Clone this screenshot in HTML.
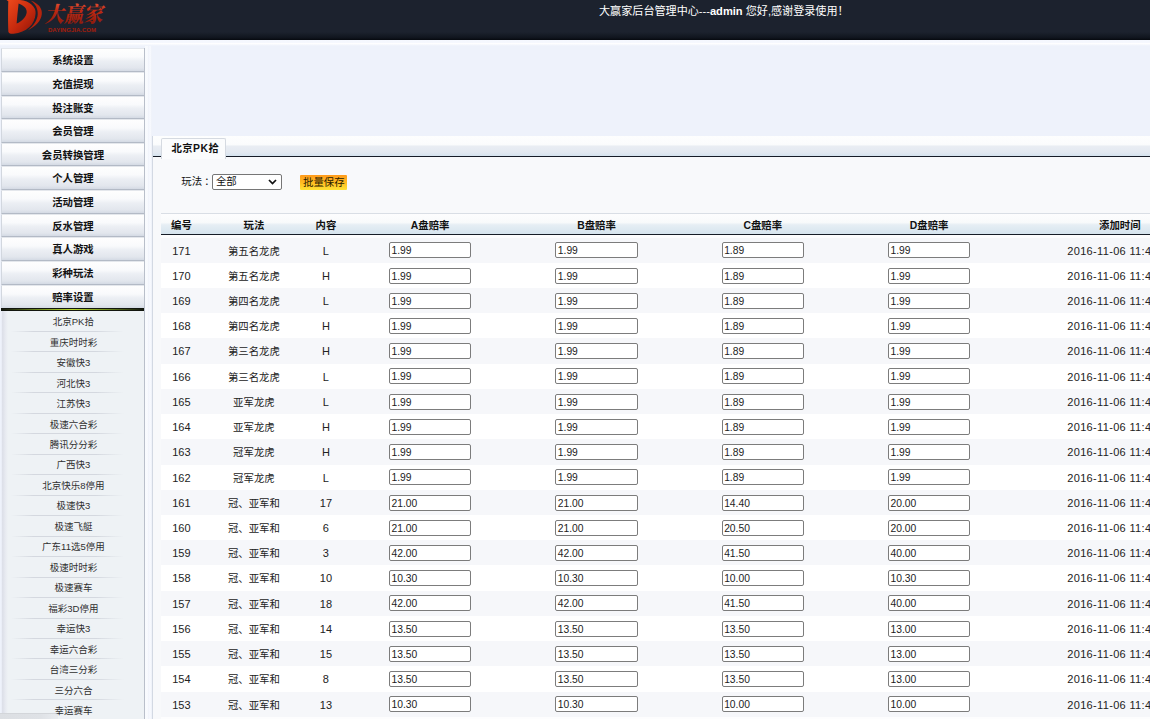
<!DOCTYPE html>
<html lang="zh-CN"><head><meta charset="utf-8"><title>大赢家后台管理中心</title>
<style>
html,body{margin:0;padding:0;}
body{width:1150px;height:719px;overflow:hidden;position:relative;background:#eef2fb;font-family:"Liberation Sans","Noto Sans CJK SC",sans-serif;font-size:10.4px;color:#111;}
*{box-sizing:border-box;}
#top{position:absolute;left:0;top:0;width:1150px;height:40px;background:linear-gradient(#1c222e 0,#1c222e 80%,#10151e 94%,#06090f 100%);}
#band{z-index:3;position:absolute;left:0;top:40px;width:1150px;height:6px;background:linear-gradient(#f4f7fe 0,#f6f8fe 45%,#ffffff 55%,#eef2fb 100%);}
#top .msg{position:absolute;left:599px;top:3.7px;color:#fff;font-size:11.1px;white-space:nowrap;line-height:14px;}
#top .msg b{font-weight:bold;}
#logo{position:absolute;left:0;top:0;}
#side{position:absolute;left:0;top:40px;width:145.2px;height:679px;background:linear-gradient(#eef2fb 0,#eef2fb 8px,rgba(238,242,251,0) 8px),linear-gradient(90deg,#eef2fb 0,#eef2fb 1.2px,#dcdfe8 2.6px,#e6e9f0 5px,#eef2f5 8px,#eef2f5 100%);overflow:hidden;}
#sbr{position:absolute;left:144.2px;top:48px;width:1px;height:671px;background:#b9bfca;}
#side .m{font-family:"Liberation Sans","Noto Sans CJK SC",sans-serif;position:absolute;left:1.2px;width:143.6px;height:23.65px;border:1px solid #d2d7df;border-top-color:#e4e7ec;border-bottom-color:#b3bac6;border-radius:1px;background:linear-gradient(#fefefe 0%,#f9fafc 36%,#eceff4 54%,#e2e6ed 86%,#d4dae4 100%);text-align:center;font-weight:bold;color:#111;font-size:10.4px;line-height:23.6px;}
#side .m.on{border-bottom:none;}
#side .ul{position:absolute;left:1.2px;width:143px;top:267.8px;height:3px;background:linear-gradient(#12160f 0,#12160f 32%,rgba(18,22,15,0) 42%,rgba(18,22,15,0) 60%,#12160f 72%,#12160f 100%),linear-gradient(90deg,#12160f 0%,#6f8a1f 25%,#bcd92e 50%,#6f8a1f 75%,#12160f 100%);}
#side .s{position:absolute;left:1.2px;width:144.4px;height:20.47px;text-align:center;color:#303030;font-size:9.5px;line-height:22px;}
#side .s i{position:absolute;left:10px;right:22px;bottom:-0.3px;height:1px;background:linear-gradient(90deg,rgba(212,216,223,0),rgba(212,216,223,1) 20%,rgba(212,216,223,1) 75%,rgba(212,216,223,0));}
#split{position:absolute;left:145.2px;top:40px;width:7.1px;height:679px;background:linear-gradient(90deg,#f8fafe 0,#f9fbfe 2.4px,#eef2fa 3px,#f5f7fd 4px,#f7f9fe 6px,#e6ebf5 7.1px);}
#panel{position:absolute;left:152.3px;top:136px;width:1000px;height:590px;background:#f8f9fb;border-left:1px solid #d3d9e3;}
#tabbar{position:absolute;left:0;top:0;width:1000px;height:20.8px;background:linear-gradient(#fdfefe 0%,#fbfcfd 42%,#e9edf3 52%,#e3e9f1 82%,#d5e3ef 100%);border-bottom:1.5px solid #161c27;}
#tab{font-family:"Liberation Sans","Noto Sans CJK SC",sans-serif;position:absolute;left:7.8px;top:1.6px;width:64.5px;height:21.8px;background:#fbfcfd;border:1px solid #d5dae1;border-bottom:none;border-radius:2px 2px 0 0;font-weight:bold;font-size:10.4px;text-align:center;line-height:20.6px;color:#111;padding-left:4px;letter-spacing:0.45px;}
#flt{position:absolute;left:28px;top:38px;height:16px;white-space:nowrap;font-size:10.4px;line-height:16px;}
#sel{position:absolute;left:58.7px;top:38.2px;width:70px;height:15.6px;border:1px solid #767676;border-radius:2px;background:#fff;font-size:10.4px;line-height:13px;padding-left:3px;}
#sel svg{position:absolute;right:4px;top:4px;}
#btn{position:absolute;left:146.8px;top:38.5px;width:47.4px;height:15.4px;background:linear-gradient(#ff9a1c 0%,#ffb820 45%,#ffe234 100%);border-radius:1px;color:#2a2000;font-size:10.4px;line-height:15px;text-align:center;}
#tbl{position:absolute;left:8.2px;top:76.8px;width:1070px;height:520px;background:#fdfdfe;}
#thead{font-family:"Liberation Sans","Noto Sans CJK SC",sans-serif;position:absolute;left:0;top:0;width:1070px;height:22.6px;border-top:1px solid #d9dee5;background:linear-gradient(#fdfdfe 0%,#f8fafb 42%,#e6eef4 54%,#d6e4ee 100%);border-bottom:1.4px solid #161c27;font-weight:bold;color:#111;}
.c{position:absolute;top:0;text-align:center;white-space:nowrap;}
.c1{left:0;width:43px}.c2{left:43px;width:102px}.c3{left:145px;width:42px}
.c4{left:187px;width:166.33px}.c5{left:353.33px;width:166.33px}.c6{left:519.67px;width:166.33px}.c7{left:686px;width:166.33px}.c8{left:852.3px;width:215px}
#thead .c{line-height:23.4px;font-size:10.4px;margin-left:-1.5px;}
.r{position:absolute;left:0;width:1070px;height:25.2px;background:#fff;line-height:25.2px;font-size:10.4px;color:#222;}
.r.o{background:#f6f7fa;}
.r .c{top:1px;margin-left:-1.6px;}
.r .num{font-size:11px;letter-spacing:0px;}
.r .in{position:absolute;top:3.8px;left:42.2px;width:82.4px;height:16px;border:1px solid #7c7c7c;border-radius:2px;background:#fff;text-align:left;font-size:10.3px;line-height:15.8px;padding-left:1.4px;color:#1c1c1c;}
.r .t{font-size:11px;letter-spacing:0.33px;text-align:left;padding-left:55.1px;}
#sb{position:absolute;left:0;top:713.4px;width:58px;height:6px;background:linear-gradient(90deg,#dcdfe3 0,#dfe2e6 70%,#e9ecf0 100%);border-top:1px solid #d3d6da;border-radius:0 3px 0 0;}
</style></head><body>
<div id="top">
<svg id="logo" width="112" height="40" viewBox="0 0 112 40">
<defs><linearGradient id="g1" x1="0" y1="0" x2="1" y2="1"><stop offset="0" stop-color="#ee4a1c"/><stop offset=".55" stop-color="#c62a0e"/><stop offset="1" stop-color="#8c1408"/></linearGradient>
<linearGradient id="g2" x1="0" y1="0" x2="0" y2="1"><stop offset="0" stop-color="#e8573a"/><stop offset=".35" stop-color="#c02a12"/><stop offset="1" stop-color="#86180a"/></linearGradient></defs>
<path fill-rule="evenodd" fill="url(#g1)" d="M6.5 0 L20 0 C30 1 36.2 7 35.6 13.5 C35 24.5 26.5 32.4 13.5 33.8 C11 34 9 33.4 8.4 32 C8 22 8 10 8.3 1.2 Z M18.6 3.4 C23.2 5 27.1 8 26.7 12.2 C26.3 17 22 21.2 16.6 23.6 C17.2 17 17.8 10 18.6 3.4 Z"/>
<path fill="#b5240d" d="M30.5 0.4 C38.2 3 42.6 8 41.8 14.2 C41 21 36 26.2 27.5 30.4 C33.8 25.4 37.4 20.2 37.7 14.2 C38 8.2 35.2 3.6 30.5 0.4 Z"/>
<text x="44.5" y="21.5" font-family="'Liberation Serif','Noto Serif CJK SC',serif" font-weight="900" font-style="italic" font-size="21.5" fill="url(#g2)" textLength="58" lengthAdjust="spacingAndGlyphs">大赢家</text>
<text x="48" y="31.6" font-family="'Liberation Sans',sans-serif" font-weight="bold" font-size="5" fill="#a31d0c" textLength="48" lengthAdjust="spacingAndGlyphs">DAYINGJIA.COM</text>
</svg>
<div class="msg">大赢家后台管理中心---<b>admin</b> 您好,感谢登录使用！</div>
</div>
<div id="band"></div>
<div id="side">
<div class="m" style="top:8.30px">系统设置</div>
<div class="m" style="top:31.92px">充值提现</div>
<div class="m" style="top:55.54px">投注账变</div>
<div class="m" style="top:79.16px">会员管理</div>
<div class="m" style="top:102.78px">会员转换管理</div>
<div class="m" style="top:126.40px">个人管理</div>
<div class="m" style="top:150.02px">活动管理</div>
<div class="m" style="top:173.64px">反水管理</div>
<div class="m" style="top:197.26px">真人游戏</div>
<div class="m" style="top:220.88px">彩种玩法</div>
<div class="m on" style="top:244.50px">赔率设置</div>
<div class="ul"></div>
<div class="s" style="top:271.20px">北京PK拾<i></i></div>
<div class="s" style="top:291.67px">重庆时时彩<i></i></div>
<div class="s" style="top:312.14px">安徽快3<i></i></div>
<div class="s" style="top:332.61px">河北快3<i></i></div>
<div class="s" style="top:353.08px">江苏快3<i></i></div>
<div class="s" style="top:373.55px">极速六合彩<i></i></div>
<div class="s" style="top:394.02px">腾讯分分彩<i></i></div>
<div class="s" style="top:414.49px">广西快3<i></i></div>
<div class="s" style="top:434.96px">北京快乐8停用<i></i></div>
<div class="s" style="top:455.43px">极速快3<i></i></div>
<div class="s" style="top:475.90px">极速飞艇<i></i></div>
<div class="s" style="top:496.37px">广东11选5停用<i></i></div>
<div class="s" style="top:516.84px">极速时时彩<i></i></div>
<div class="s" style="top:537.31px">极速赛车<i></i></div>
<div class="s" style="top:557.78px">福彩3D停用<i></i></div>
<div class="s" style="top:578.25px">幸运快3<i></i></div>
<div class="s" style="top:598.72px">幸运六合彩<i></i></div>
<div class="s" style="top:619.19px">台湾三分彩<i></i></div>
<div class="s" style="top:639.66px">三分六合<i></i></div>
<div class="s" style="top:660.13px">幸运赛车<i></i></div>
</div>
<div id="sbr"></div>
<div id="split"></div>
<div id="panel">
<div id="tabbar"></div><div id="tab">北京PK拾</div>
<div id="flt">玩法<span style="position:relative;left:2.2px">：</span></div>
<div id="sel">全部<svg width="9" height="6" viewBox="0 0 9 6"><path d="M1 1 L4.5 4.6 L8 1" fill="none" stroke="#111" stroke-width="1.7"/></svg></div>
<div id="btn">批量保存</div>
<div id="tbl">
<div id="thead"><div class="c c1">编号</div><div class="c c2">玩法</div><div class="c c3">内容</div><div class="c c4">A盘赔率</div><div class="c c5">B盘赔率</div><div class="c c6">C盘赔率</div><div class="c c7">D盘赔率</div><div class="c c8">添加时间</div></div>
<div class="r o" style="top:24.80px"><div class="c c1 num">171</div><div class="c c2">第五名龙虎</div><div class="c c3 num">L</div><div class="c c4"><div class="in">1.99</div></div><div class="c c5"><div class="in">1.99</div></div><div class="c c6"><div class="in">1.89</div></div><div class="c c7"><div class="in">1.99</div></div><div class="c c8 t">2016-11-06 11:43:20</div></div>
<div class="r" style="top:50.02px"><div class="c c1 num">170</div><div class="c c2">第五名龙虎</div><div class="c c3 num">H</div><div class="c c4"><div class="in">1.99</div></div><div class="c c5"><div class="in">1.99</div></div><div class="c c6"><div class="in">1.89</div></div><div class="c c7"><div class="in">1.99</div></div><div class="c c8 t">2016-11-06 11:43:21</div></div>
<div class="r o" style="top:75.24px"><div class="c c1 num">169</div><div class="c c2">第四名龙虎</div><div class="c c3 num">L</div><div class="c c4"><div class="in">1.99</div></div><div class="c c5"><div class="in">1.99</div></div><div class="c c6"><div class="in">1.89</div></div><div class="c c7"><div class="in">1.99</div></div><div class="c c8 t">2016-11-06 11:43:22</div></div>
<div class="r" style="top:100.46px"><div class="c c1 num">168</div><div class="c c2">第四名龙虎</div><div class="c c3 num">H</div><div class="c c4"><div class="in">1.99</div></div><div class="c c5"><div class="in">1.99</div></div><div class="c c6"><div class="in">1.89</div></div><div class="c c7"><div class="in">1.99</div></div><div class="c c8 t">2016-11-06 11:43:23</div></div>
<div class="r o" style="top:125.68px"><div class="c c1 num">167</div><div class="c c2">第三名龙虎</div><div class="c c3 num">H</div><div class="c c4"><div class="in">1.99</div></div><div class="c c5"><div class="in">1.99</div></div><div class="c c6"><div class="in">1.89</div></div><div class="c c7"><div class="in">1.99</div></div><div class="c c8 t">2016-11-06 11:43:24</div></div>
<div class="r" style="top:150.90px"><div class="c c1 num">166</div><div class="c c2">第三名龙虎</div><div class="c c3 num">L</div><div class="c c4"><div class="in">1.99</div></div><div class="c c5"><div class="in">1.99</div></div><div class="c c6"><div class="in">1.89</div></div><div class="c c7"><div class="in">1.99</div></div><div class="c c8 t">2016-11-06 11:43:25</div></div>
<div class="r o" style="top:176.12px"><div class="c c1 num">165</div><div class="c c2">亚军龙虎</div><div class="c c3 num">L</div><div class="c c4"><div class="in">1.99</div></div><div class="c c5"><div class="in">1.99</div></div><div class="c c6"><div class="in">1.89</div></div><div class="c c7"><div class="in">1.99</div></div><div class="c c8 t">2016-11-06 11:43:26</div></div>
<div class="r" style="top:201.34px"><div class="c c1 num">164</div><div class="c c2">亚军龙虎</div><div class="c c3 num">H</div><div class="c c4"><div class="in">1.99</div></div><div class="c c5"><div class="in">1.99</div></div><div class="c c6"><div class="in">1.89</div></div><div class="c c7"><div class="in">1.99</div></div><div class="c c8 t">2016-11-06 11:43:27</div></div>
<div class="r o" style="top:226.56px"><div class="c c1 num">163</div><div class="c c2">冠军龙虎</div><div class="c c3 num">H</div><div class="c c4"><div class="in">1.99</div></div><div class="c c5"><div class="in">1.99</div></div><div class="c c6"><div class="in">1.89</div></div><div class="c c7"><div class="in">1.99</div></div><div class="c c8 t">2016-11-06 11:43:28</div></div>
<div class="r" style="top:251.78px"><div class="c c1 num">162</div><div class="c c2">冠军龙虎</div><div class="c c3 num">L</div><div class="c c4"><div class="in">1.99</div></div><div class="c c5"><div class="in">1.99</div></div><div class="c c6"><div class="in">1.89</div></div><div class="c c7"><div class="in">1.99</div></div><div class="c c8 t">2016-11-06 11:43:29</div></div>
<div class="r o" style="top:277.00px"><div class="c c1 num">161</div><div class="c c2">冠、亚军和</div><div class="c c3 num">17</div><div class="c c4"><div class="in">21.00</div></div><div class="c c5"><div class="in">21.00</div></div><div class="c c6"><div class="in">14.40</div></div><div class="c c7"><div class="in">20.00</div></div><div class="c c8 t">2016-11-06 11:43:20</div></div>
<div class="r" style="top:302.22px"><div class="c c1 num">160</div><div class="c c2">冠、亚军和</div><div class="c c3 num">6</div><div class="c c4"><div class="in">21.00</div></div><div class="c c5"><div class="in">21.00</div></div><div class="c c6"><div class="in">20.50</div></div><div class="c c7"><div class="in">20.00</div></div><div class="c c8 t">2016-11-06 11:43:21</div></div>
<div class="r o" style="top:327.44px"><div class="c c1 num">159</div><div class="c c2">冠、亚军和</div><div class="c c3 num">3</div><div class="c c4"><div class="in">42.00</div></div><div class="c c5"><div class="in">42.00</div></div><div class="c c6"><div class="in">41.50</div></div><div class="c c7"><div class="in">40.00</div></div><div class="c c8 t">2016-11-06 11:43:22</div></div>
<div class="r" style="top:352.66px"><div class="c c1 num">158</div><div class="c c2">冠、亚军和</div><div class="c c3 num">10</div><div class="c c4"><div class="in">10.30</div></div><div class="c c5"><div class="in">10.30</div></div><div class="c c6"><div class="in">10.00</div></div><div class="c c7"><div class="in">10.30</div></div><div class="c c8 t">2016-11-06 11:43:23</div></div>
<div class="r o" style="top:377.88px"><div class="c c1 num">157</div><div class="c c2">冠、亚军和</div><div class="c c3 num">18</div><div class="c c4"><div class="in">42.00</div></div><div class="c c5"><div class="in">42.00</div></div><div class="c c6"><div class="in">41.50</div></div><div class="c c7"><div class="in">40.00</div></div><div class="c c8 t">2016-11-06 11:43:24</div></div>
<div class="r" style="top:403.10px"><div class="c c1 num">156</div><div class="c c2">冠、亚军和</div><div class="c c3 num">14</div><div class="c c4"><div class="in">13.50</div></div><div class="c c5"><div class="in">13.50</div></div><div class="c c6"><div class="in">13.50</div></div><div class="c c7"><div class="in">13.00</div></div><div class="c c8 t">2016-11-06 11:43:25</div></div>
<div class="r o" style="top:428.32px"><div class="c c1 num">155</div><div class="c c2">冠、亚军和</div><div class="c c3 num">15</div><div class="c c4"><div class="in">13.50</div></div><div class="c c5"><div class="in">13.50</div></div><div class="c c6"><div class="in">13.50</div></div><div class="c c7"><div class="in">13.00</div></div><div class="c c8 t">2016-11-06 11:43:26</div></div>
<div class="r" style="top:453.54px"><div class="c c1 num">154</div><div class="c c2">冠、亚军和</div><div class="c c3 num">8</div><div class="c c4"><div class="in">13.50</div></div><div class="c c5"><div class="in">13.50</div></div><div class="c c6"><div class="in">13.50</div></div><div class="c c7"><div class="in">13.00</div></div><div class="c c8 t">2016-11-06 11:43:27</div></div>
<div class="r o" style="top:478.76px"><div class="c c1 num">153</div><div class="c c2">冠、亚军和</div><div class="c c3 num">13</div><div class="c c4"><div class="in">10.30</div></div><div class="c c5"><div class="in">10.30</div></div><div class="c c6"><div class="in">10.00</div></div><div class="c c7"><div class="in">10.00</div></div><div class="c c8 t">2016-11-06 11:43:28</div></div>
</div></div>
<div id="sb"></div>
</body></html>
